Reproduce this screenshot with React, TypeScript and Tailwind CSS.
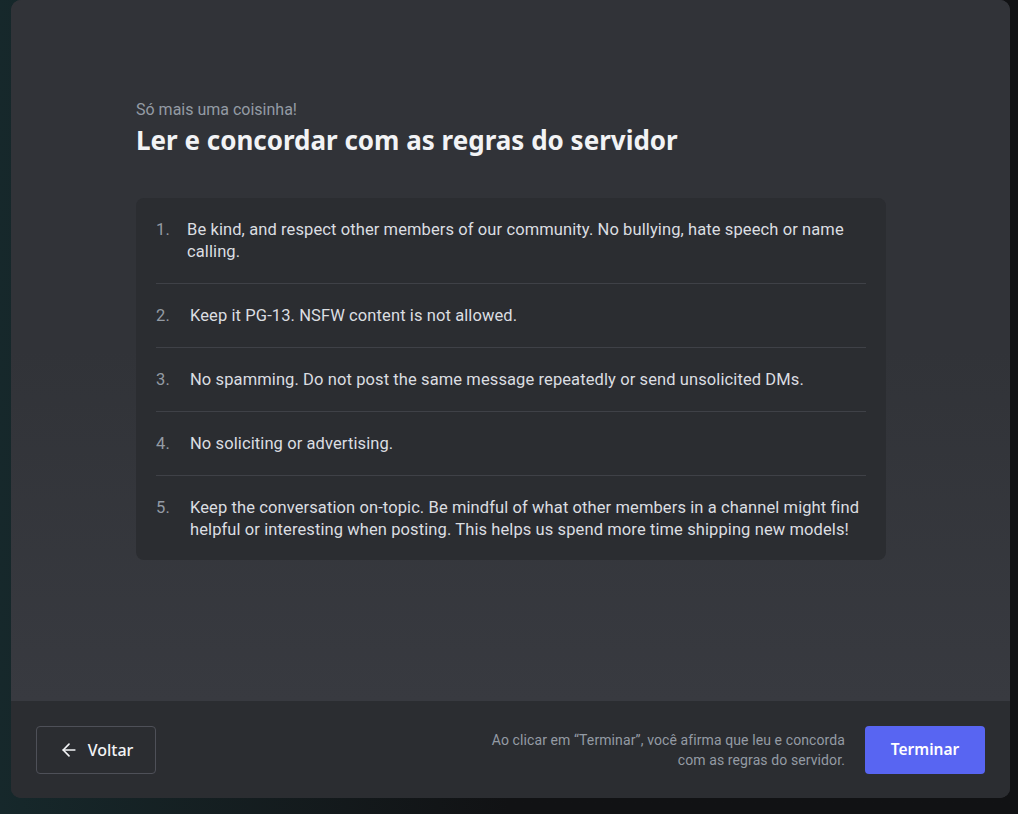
import { ArrowLeft } from 'lucide-react'

const rules = [
  'Be kind, and respect other members of our community. No bullying, hate speech or name calling.',
  'Keep it PG-13. NSFW content is not allowed.',
  'No spamming. Do not post the same message repeatedly or send unsolicited DMs.',
  'No soliciting or advertising.',
  'Keep the conversation on-topic. Be mindful of what other members in a channel might find helpful or interesting when posting. This helps us spend more time shipping new models!',
]

export default function App() {
  return (
    <div
      className="h-[814px] w-[1018px] overflow-hidden bg-[#111214] pl-[11px] pr-[8px] pb-[16px] bg-gradient-to-r from-[#16282b] via-[#111214] to-[#111214]"
      style={{ fontFamily: 'Roboto, "Noto Sans", sans-serif' }}
    >
      <div className="flex h-full flex-col overflow-hidden rounded-[10px] bg-[#313338]">
        {/* Body */}
        <div className="flex-1 bg-gradient-to-b from-[#313338] via-[#313338] to-[#383a40] px-[125px] pt-[100px]">
          <p className="text-[16px] leading-[20px] text-[#949ba4]">Só mais uma coisinha!</p>
          <h1
            className="mt-[4px] text-[26px] font-bold leading-[32px] text-[#f2f3f5]"
            style={{ fontFamily: '"Noto Sans", sans-serif' }}
          >
            Ler e concordar com as regras do servidor
          </h1>

          <ol className="mt-[42px] w-[750px] rounded-[8px] bg-[#2b2d31] px-5 pb-[19px]">
            {rules.map((r, i) => (
              <li
                key={i}
                className={
                  'flex pt-[21px] text-[16.5px] leading-[22px] tracking-[0.1px] ' +
                  (i < rules.length - 1 ? 'border-b border-[#3f4147] pb-5' : '')
                }
              >
                <span className={'shrink-0 text-[#949ba4] ' + (i === 0 ? 'w-[31px]' : 'w-[34px]')}>
                  {i + 1}.
                </span>
                <span className="text-[#dbdee1]">{r}</span>
              </li>
            ))}
          </ol>
        </div>

        {/* Footer */}
        <div className="flex h-[97px] items-center justify-between border-t border-[#2b2d31] bg-[#2b2d31] px-[25px]">
          <button
            className="flex h-[48px] w-[120px] items-center justify-center gap-[9px] rounded-[4px] border border-[#4e5058] text-[16px] font-medium text-[#f2f3f5]"
            style={{ fontFamily: '"Noto Sans", sans-serif' }}
          >
            <ArrowLeft size={20} strokeWidth={2} />
            Voltar
          </button>
          <div className="flex items-center gap-[20px]">
            <p className="text-right text-[14px] leading-[20px] tracking-[0.1px] text-[#949ba4]">
              Ao clicar em “Terminar”, você afirma que leu e concorda
              <br />
              com as regras do servidor.
            </p>
            <button
              className="flex h-[48px] w-[120px] items-center justify-center rounded-[4px] bg-[#5865f2] text-[15.5px] font-semibold text-white"
              style={{ fontFamily: '"Noto Sans", sans-serif' }}
            >
              Terminar
            </button>
          </div>
        </div>
      </div>
    </div>
  )
}
